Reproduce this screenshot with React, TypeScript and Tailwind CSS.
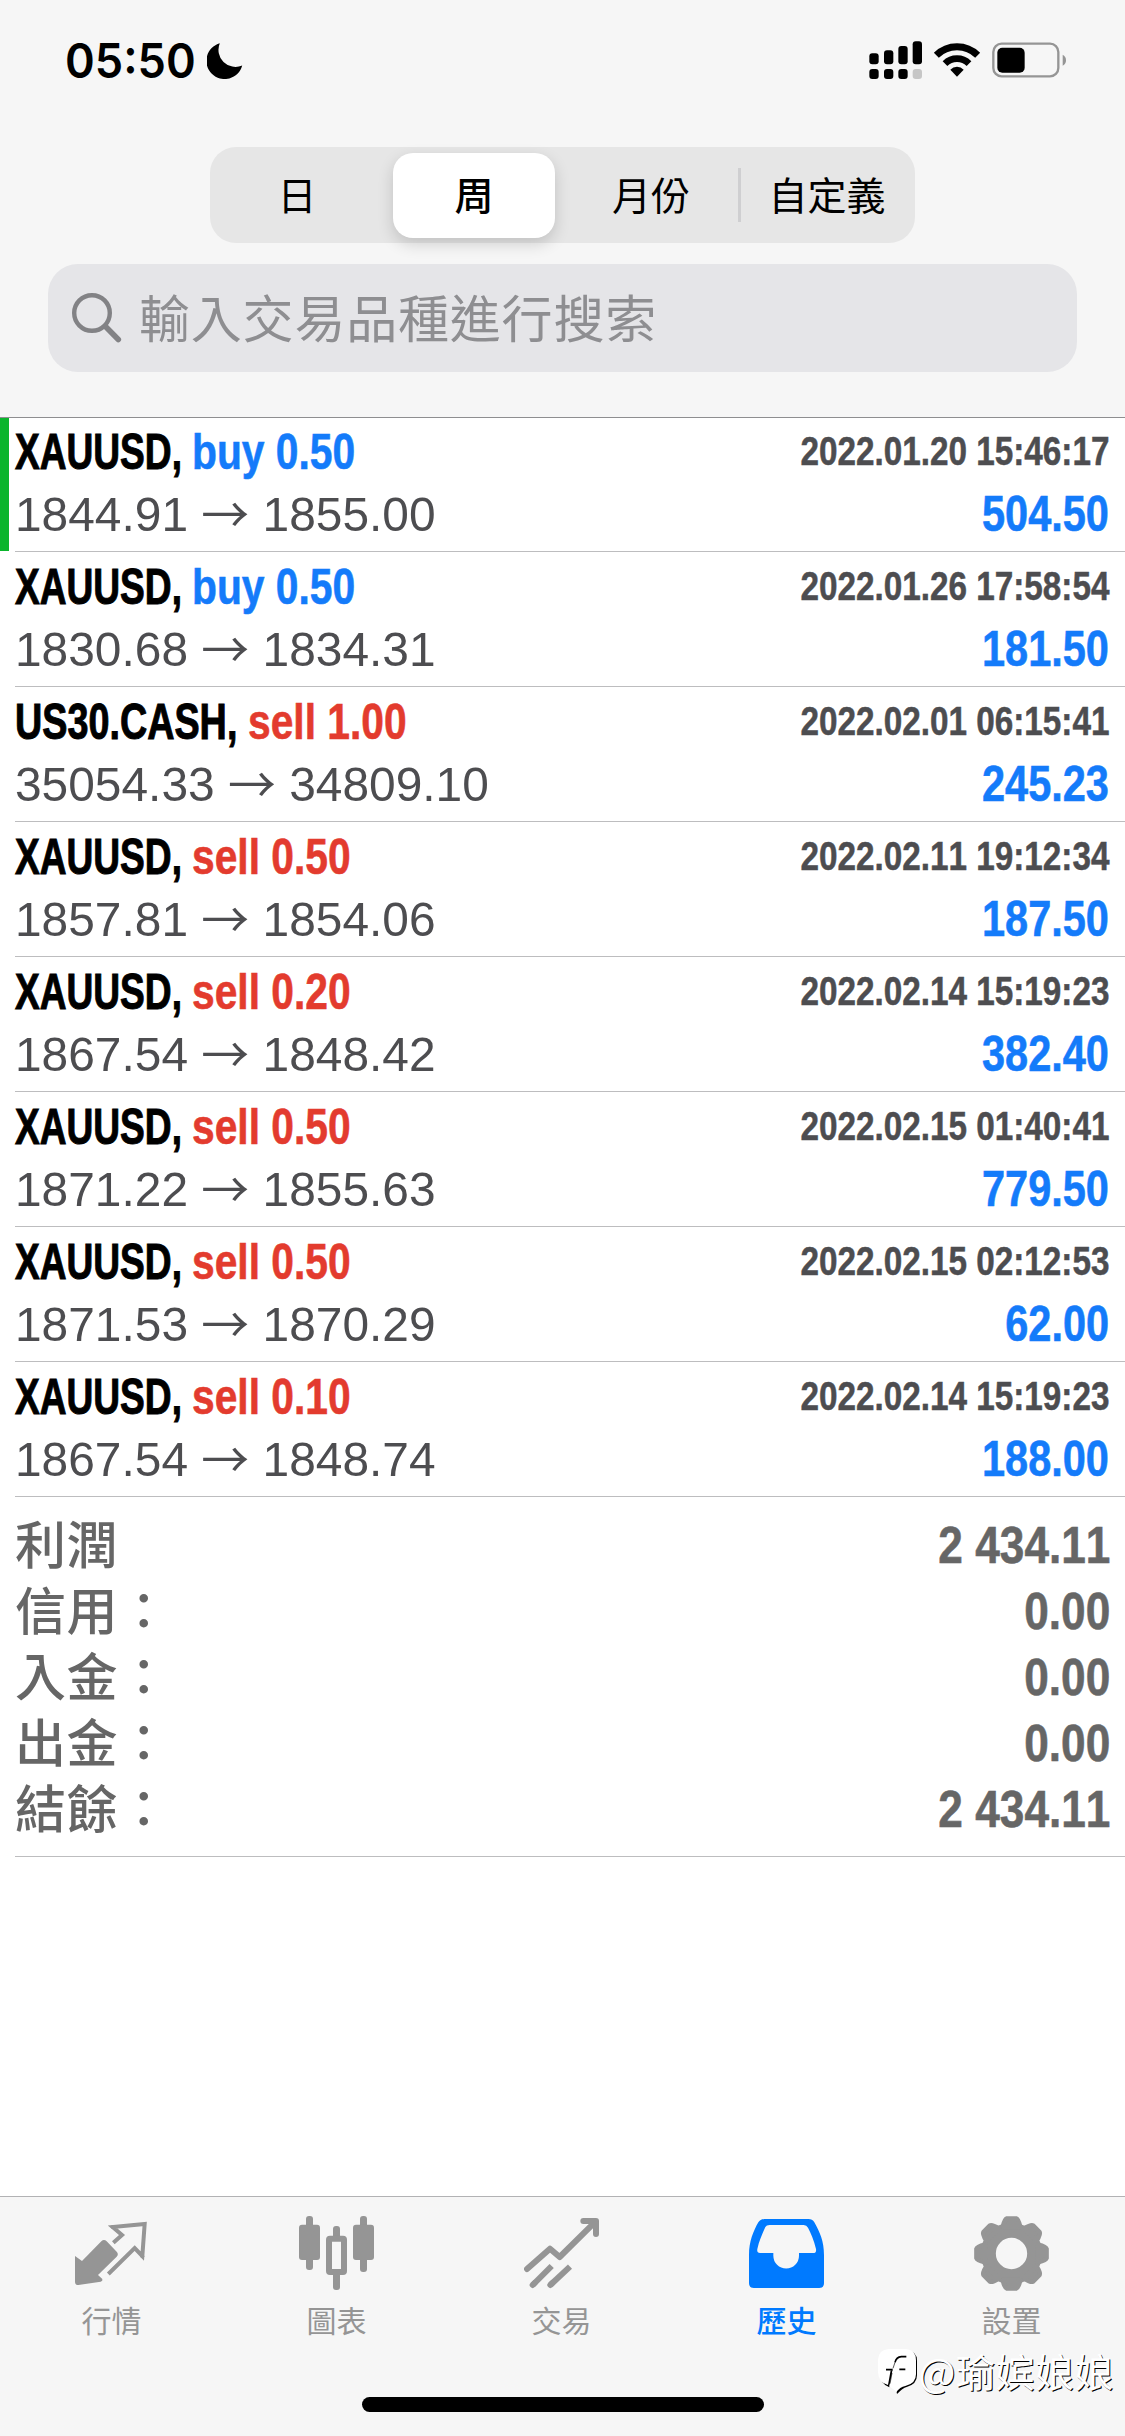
import type { ReactNode } from "react";

type Trade = {
  symbol: string;
  symbolWidth: string;
  symbolScale: string;
  side: "buy" | "sell";
  volume: string;
  open: string;
  close: string;
  time: string;
  profit: string;
  marked?: boolean;
};

const GOLD = { symbol: "XAUUSD", symbolWidth: "w-[177px]", symbolScale: "scale-x-[0.742]" };
const DOW = { symbol: "US30.CASH", symbolWidth: "w-[233px]", symbolScale: "scale-x-[0.755]" };

const trades: Trade[] = [
  { ...GOLD, side: "buy", volume: "0.50", open: "1844.91", close: "1855.00", time: "2022.01.20 15:46:17", profit: "504.50", marked: true },
  { ...GOLD, side: "buy", volume: "0.50", open: "1830.68", close: "1834.31", time: "2022.01.26 17:58:54", profit: "181.50" },
  { ...DOW, side: "sell", volume: "1.00", open: "35054.33", close: "34809.10", time: "2022.02.01 06:15:41", profit: "245.23" },
  { ...GOLD, side: "sell", volume: "0.50", open: "1857.81", close: "1854.06", time: "2022.02.11 19:12:34", profit: "187.50" },
  { ...GOLD, side: "sell", volume: "0.20", open: "1867.54", close: "1848.42", time: "2022.02.14 15:19:23", profit: "382.40" },
  { ...GOLD, side: "sell", volume: "0.50", open: "1871.22", close: "1855.63", time: "2022.02.15 01:40:41", profit: "779.50" },
  { ...GOLD, side: "sell", volume: "0.50", open: "1871.53", close: "1870.29", time: "2022.02.15 02:12:53", profit: "62.00" },
  { ...GOLD, side: "sell", volume: "0.10", open: "1867.54", close: "1848.74", time: "2022.02.14 15:19:23", profit: "188.00" },
];

const summary = [
  ["利潤", "2 434.11"],
  ["信用：", "0.00"],
  ["入金：", "0.00"],
  ["出金：", "0.00"],
  ["結餘：", "2 434.11"],
];

function StatusBar() {
  return (
    <div className="flex h-[147px] items-start justify-between pt-[30px] pr-[45px] pl-[65px]">
      <div className="flex h-[60px] items-center pt-px">
        <span className="w-[142px] origin-left scale-x-[0.94] font-['Inter'] text-[48px] leading-none font-semibold">05:50</span>
        <svg className="h-9 w-9" viewBox="0 0 36 36">
          <path d="M12.8.3A18.2 18.2 0 1 0 35.2 22.5A17 17 0 0 1 12.8.3Z" />
        </svg>
      </div>
      <svg className="h-[60px] w-[220px]" viewBox="0 0 660 180">
        <rect x="28" y="70" width="28" height="33" rx="9" />
        <rect x="72" y="61" width="28" height="42" rx="9" />
        <rect x="115" y="48" width="28" height="55" rx="9" />
        <rect x="158" y="34" width="28" height="69" rx="9" />
        <rect x="28" y="117" width="28" height="30" rx="9" />
        <rect x="72" y="117" width="28" height="30" rx="9" />
        <rect x="115" y="117" width="28" height="30" rx="9" />
        <rect x="158" y="117" width="28" height="30" rx="9" fill="#c6c6c6" />
        <g fill="none" stroke="#000">
          <path d="M229 76A88 88 0 0 1 353 76" strokeWidth="21" />
          <path d="M255 101A51 51 0 0 1 327 101" strokeWidth="20" />
        </g>
        <path d="M271 119A28 28 0 0 1 311 119L291 140Z" />
        <rect x="400" y="41" width="195" height="98" rx="25" fill="none" stroke="#959595" strokeWidth="7" />
        <rect x="412" y="53" width="82" height="75" rx="15" />
        <path d="M608 74Q618 79 618 90.500Q618 102 608 107Z" fill="#959595" />
      </svg>
    </div>
  );
}

function PeriodControl() {
  return (
    <div className="mx-auto flex h-24 w-[705px] items-center rounded-[26px] bg-[#e6e6e6] font-['Noto_Sans_CJK_TC'] text-[39px] leading-[60px]">
      <div className="w-[176px] pr-[2px] pb-1 text-center">日</div>
      <div className="flex w-[176px] justify-center">
        <div className="flex h-[85px] w-[162px] items-center justify-center rounded-[20px] bg-white pb-1 font-medium shadow-[0_6px_16px_rgba(0,0,0,0.16)]">周</div>
      </div>
      <div className="w-[176px] pb-1 pl-[2px] text-center">月份</div>
      <div className="h-[54px] w-[3px] bg-[#cfcfd1]" />
      <div className="w-[174px] pr-[2px] pb-1 text-center">自定義</div>
    </div>
  );
}

function SearchBar() {
  return (
    <div className="mx-[48px] mt-[21px] flex h-[108px] items-center rounded-[30px] bg-[#e5e5e8] pl-6">
      <svg className="h-[50px] w-[50px]" viewBox="0 0 50 50" fill="none" stroke="#828285" strokeLinecap="round">
        <circle cx="20" cy="20" r="17.800" strokeWidth="4.400" />
        <path d="M34 34L46.300 46.500" strokeWidth="5.600" />
      </svg>
      <span className="ml-[17px] pb-[4px] font-['Noto_Sans_CJK_TC'] text-[51px] leading-none tracking-[0.8px] text-[#8e8e91]">輸入交易品種進行搜索</span>
    </div>
  );
}

function TradeRow({ t }: { t: Trade }) {
  const sideColor = t.side === "buy" ? "text-[#147bfa]" : "text-[#e33b2e]";
  return (
    <div className="flex h-[135px]">
      <div className={t.marked ? "h-[134px] w-[9px] bg-[#0ab52c]" : "w-[9px]"} />
      <div className="ml-[6px] flex flex-1 justify-between border-b border-[#bdbdbf] pr-4 font-['Liberation_Sans'] whitespace-nowrap [font-kerning:none]">
        <div>
          <div className="flex h-[68px] text-[50px] leading-[70px] font-bold">
            <div className={t.symbolWidth}>
              <div className={`w-max origin-left [-webkit-text-stroke:1px_#000] ${t.symbolScale}`}>{t.symbol},</div>
            </div>
            <div className={`w-max origin-left scale-x-[0.815] [-webkit-text-stroke:0.6px_currentColor] ${sideColor}`}>{t.side} {t.volume}</div>
          </div>
          <div className="h-[58px] w-max origin-left scale-x-[0.977] text-[49px] leading-[58px] text-[#4d4d50]">
            {t.open} <span className="relative top-[2px] font-['Noto_Sans_CJK_TC'] leading-none">→</span> {t.close}
          </div>
        </div>
        <div className="flex flex-col items-end font-bold">
          <div className="h-[68px] origin-right scale-x-[0.832] text-[40px] leading-[68px] text-[#4d4d50] [-webkit-text-stroke:0.5px_currentColor]">{t.time}</div>
          <div className="h-[58px] origin-right scale-x-[0.83] text-[50px] leading-[59px] text-[#147bfa] [-webkit-text-stroke:0.6px_currentColor]">{t.profit}</div>
        </div>
      </div>
    </div>
  );
}

function Summary() {
  return (
    <div className="ml-[15px] h-[360px] border-b border-[#bdbdbf] pt-[12px] pr-[15px] text-[#666666]">
      {summary.map(([label, value]) => (
        <div key={label} className="flex h-[66px] items-center justify-between">
          <span className="font-['Noto_Sans_CJK_TC'] text-[51px] leading-none font-medium tracking-[0.6px]">{label}</span>
          <span className="origin-right scale-x-[0.85] pt-[5px] font-['Liberation_Sans'] text-[52px] leading-none font-bold [-webkit-text-stroke:0.6px_currentColor] [font-kerning:none]">{value}</span>
        </div>
      ))}
    </div>
  );
}

function QuotesIcon() {
  return (
    <svg className="h-[75px] w-[75px]" viewBox="42 33 225 225">
      <path fill="currentColor" d="M45 153L66 168L124 109Q132 101 140 109L170 140Q177 147 170 155L114 210L127 222Q129 228 122 230L55 240Q45 240 45 230Z" />
      <path fill="none" stroke="currentColor" strokeWidth="12" d="M160 113L186 90L158 66L254 57L247 153L224 129L145 207" />
      <circle cx="158" cy="66" r="6" fill="currentColor" />
      <circle cx="247" cy="154" r="6" fill="currentColor" />
    </svg>
  );
}

function ChartIcon() {
  return (
    <svg className="h-[75px] w-[75px]" viewBox="717 33 225 225" fill="currentColor">
      <rect x="738" y="33" width="21" height="162" rx="9" />
      <rect x="717" y="59" width="63" height="106" rx="9" />
      <rect x="900" y="33" width="21" height="168" rx="9" />
      <rect x="879" y="59" width="63" height="106" rx="9" />
      <rect x="819" y="63" width="21" height="45" rx="9" />
      <rect x="819" y="196" width="21" height="59" rx="9" />
      <rect x="807" y="101.500" width="45" height="99.500" rx="3" fill="none" stroke="currentColor" strokeWidth="18" />
    </svg>
  );
}

function TradeIcon() {
  return (
    <svg className="h-[75px] w-[75px]" viewBox="42 33 225 225" fill="none" stroke="currentColor" strokeWidth="18" strokeLinejoin="round">
      <g strokeLinecap="round">
        <path d="M51 192L120 131L149 156L254 52" />
        <path d="M220 48H258V87" />
        <path d="M68 240L74 234" />
        <path d="M121 240L127 234" />
      </g>
      <path d="M68 240L125 183" />
      <path d="M121 240L180 185" />
    </svg>
  );
}

function HistoryIcon() {
  return (
    <svg className="h-[75px] w-[75px]" viewBox="717 33 225 225" fill="currentColor" fillRule="evenodd">
      <path d="M764 42H895Q907 42 913 52C930 82 942 110 942 150V235Q942 249 928 249H731Q717 249 717 235V150C717 110 730 78 745 52Q751 42 764 42ZM779 60H881Q890 60 894 68C902 84 912 105 918 132Q920 144 909 144H867V152A38.500 38.500 0 0 1 790 152V144H750Q740 144 742 132C748 105 758 84 766 66Q769 60 779 60Z" />
    </svg>
  );
}

function SettingsIcon() {
  return (
    <svg className="h-[75px] w-[75px]" viewBox="-112.500 -112.500 225 225">
      <circle r="69.500" fill="none" stroke="currentColor" strokeWidth="45" />
      {[0, 45, 90, 135, 180, 225, 270, 315].map((a) => (
        <path key={a} transform={`rotate(${a})`} d="M-26 -80Q-21 -103 -14 -105H14Q21 -103 26 -80Z" fill="currentColor" stroke="currentColor" strokeWidth="14" strokeLinejoin="round" />
      ))}
    </svg>
  );
}

const tabs: { label: string; icon: ReactNode; active?: boolean }[] = [
  { label: "行情", icon: <QuotesIcon /> },
  { label: "圖表", icon: <ChartIcon /> },
  { label: "交易", icon: <TradeIcon /> },
  { label: "歷史", icon: <HistoryIcon />, active: true },
  { label: "設置", icon: <SettingsIcon /> },
];

function Watermark() {
  return (
    <div className="absolute right-[11px] bottom-[40px] flex items-center text-white">
      <svg className="mt-[3px] h-[46px] w-[40px] overflow-visible" viewBox="0 0 120 138">
        <path fill="#000" d="M34 4H86Q117 6 117 36V79Q117 106 86 114Q74 117 57 135L54 120L64 66H44L34 115Q8 105 4 74V36Q4 6 34 4Z" />
        <path fill="#fff" d="M32 0H84Q114 2 114 34V76Q114 104 82 111Q66 114 54 130L50 110L60 64H38L30 108Q2 102 0 70V32Q2 2 32 0Z" />
        <path fill="#fff" d="M44 62H62L56 128L34 112Z" />
        <path fill="none" stroke="#000" strokeWidth="5" d="M85 23H70Q55 24 51 40M24 62H44M64 61H82" />
        <path fill="none" stroke="#000" strokeWidth="2" d="M51 40L45 58M42 72L36 104" />
      </svg>
      <span className="ml-[1px] font-['Noto_Sans_CJK_SC'] text-[39px] leading-[52px] tracking-[0.5px] [text-shadow:1px_1px_0.5px_#000]">@瑜嫔娘娘</span>
    </div>
  );
}

function TabBar() {
  return (
    <div className="relative flex h-[240px] flex-col border-t border-[#b2b2b4] bg-[#f6f6f6]">
      <div className="flex pt-[19px]">
        {tabs.map((tab) => (
          <div key={tab.label} className={`flex w-[225px] flex-col items-center pr-[2px] ${tab.active ? "font-medium text-[#007aff]" : "text-[#959595]"}`}>
            {tab.icon}
            <span className="mt-2 font-['Noto_Sans_CJK_TC'] text-[30px] leading-10">{tab.label}</span>
          </div>
        ))}
      </div>
      <div className="mx-auto mt-auto mb-6 h-[15px] w-[402px] rounded-full bg-black" />
      <Watermark />
    </div>
  );
}

export default function App() {
  return (
    <div className="flex h-[2436px] w-[1125px] flex-col overflow-hidden bg-white font-['Liberation_Sans'] text-black">
      <header className="relative -mb-px h-[418px] shrink-0 border-b border-[#8e8e90] bg-[#f6f6f6]">
        <StatusBar />
        <PeriodControl />
        <SearchBar />
      </header>
      <main className="flex-1">
        {trades.map((t, i) => (
          <TradeRow key={i} t={t} />
        ))}
        <Summary />
      </main>
      <TabBar />
    </div>
  );
}
